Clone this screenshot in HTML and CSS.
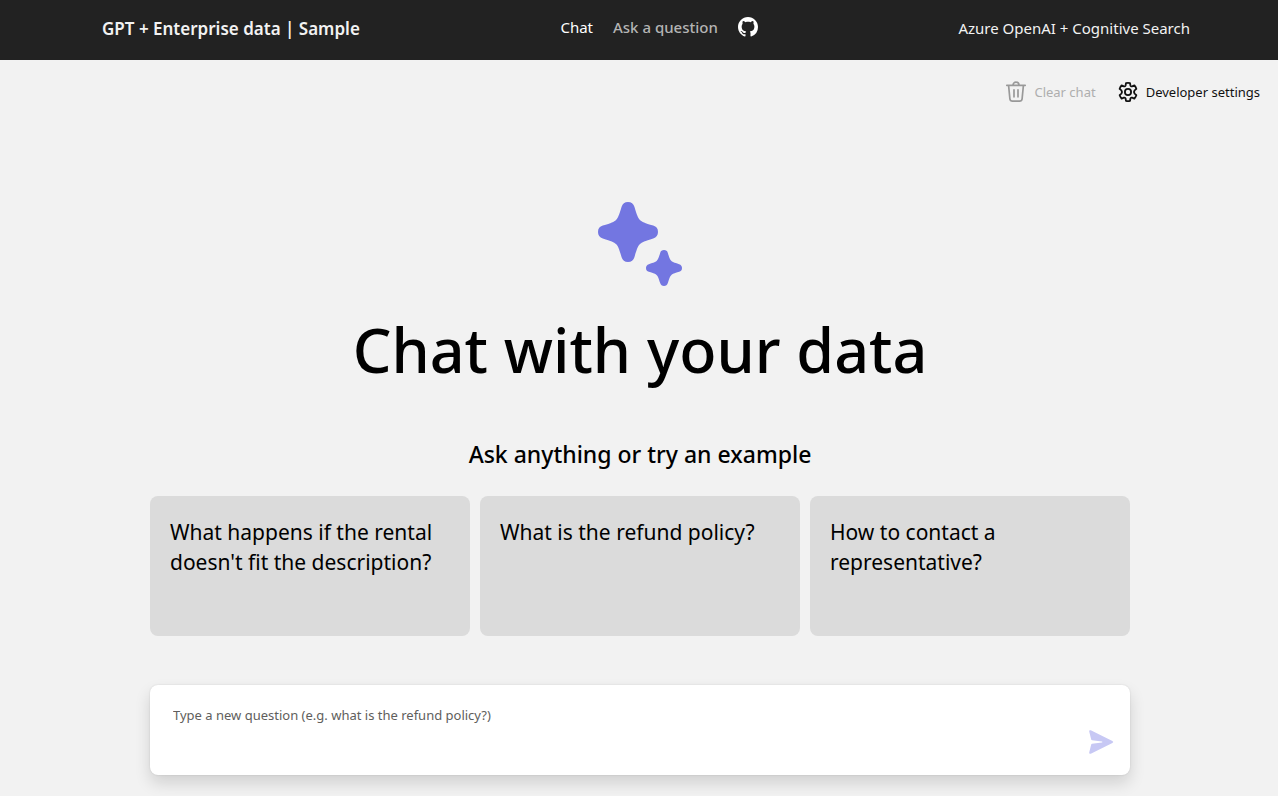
FILE: index.html
```html
<!DOCTYPE html>
<html lang="en">
<head>
<meta charset="utf-8">
<meta name="viewport" content="width=device-width, initial-scale=1">
<title>GPT + Enterprise data | Sample</title>
<link rel="stylesheet" href="styles.css">
</head>
<body>
<header class="header">
  <div class="header-inner">
    <a class="header-title" href="#">GPT + Enterprise data | Sample</a>
    <nav class="nav">
      <a class="nav-link nav-link-active" href="#">Chat</a>
      <a class="nav-link" href="#">Ask a question</a>
      <a class="nav-github" href="#" aria-label="GitHub repository">
        <svg width="20" height="20" viewBox="0 0 16 16" fill="currentColor" aria-hidden="true"><path d="M8 0C3.58 0 0 3.58 0 8c0 3.54 2.29 6.53 5.47 7.59.4.07.55-.17.55-.38 0-.19-.01-.82-.01-1.49-2.01.37-2.53-.49-2.69-.94-.09-.23-.48-.94-.82-1.13-.28-.15-.68-.52-.01-.53.63-.01 1.08.58 1.23.82.72 1.21 1.87.87 2.33.66.07-.52.28-.87.51-1.07-1.78-.2-3.64-.89-3.64-3.95 0-.87.31-1.59.82-2.15-.08-.2-.36-1.02.08-2.12 0 0 .67-.21 2.2.82.64-.18 1.32-.27 2-.27s1.36.09 2 .27c1.53-1.04 2.2-.82 2.2-.82.44 1.1.16 1.92.08 2.12.51.56.82 1.27.82 2.15 0 3.07-1.87 3.75-3.65 3.95.29.25.54.73.54 1.48 0 1.07-.01 1.93-.01 2.2 0 .21.15.46.55.38A8.01 8.01 0 0 0 16 8c0-4.42-3.58-8-8-8z"/></svg>
      </a>
    </nav>
    <span class="header-tagline">Azure OpenAI + Cognitive Search</span>
  </div>
</header>
<main class="page">
  <div class="commands">
    <button class="command" type="button" disabled>
      <svg width="24" height="24" viewBox="0 0 24 24" fill="none" stroke="currentColor" stroke-width="1.7" stroke-linecap="round" stroke-linejoin="round" aria-hidden="true"><path d="M2.8 5.3h18.4M9 5.2a3 3 0 0 1 6 0M4.6 5.5l1.3 13.4a2.6 2.6 0 0 0 2.6 2.3h7a2.6 2.6 0 0 0 2.6-2.3l1.3-13.4M10 9.8v7M14 9.8v7"/></svg>
      <span class="command-label">Clear chat</span>
    </button>
    <button class="command" type="button">
      <svg width="24" height="24" viewBox="0 0 24 24" fill="none" stroke="currentColor" stroke-width="1.8" stroke-linejoin="round" aria-hidden="true"><circle cx="12" cy="12" r="3.1"/><path d="M10 3.1q2-.5 4 0l.4 2.3q.4 1.3 1.7.9l2.3-.9q1.4 1.5 2 3.5l-1.8 1.5q-1.2 1.6 0 3.2l1.8 1.5q-.6 2-2 3.5l-2.3-.9q-1.3-.4-1.7.9l-.4 2.3q-2 .5-4 0l-.4-2.3q-.4-1.3-1.7-.9l-2.3.9q-1.4-1.5-2-3.5l1.8-1.5q1.2-1.6 0-3.2L3.6 8.9q.6-2 2-3.5l2.3.9q1.3.4 1.7-.9z"/></svg>
      <span class="command-label">Developer settings</span>
    </button>
  </div>
  <div class="chat">
    <section class="empty">
      <svg class="sparkle" width="84" height="84" viewBox="0 0 84 84" aria-hidden="true">
        <defs><path id="star" d="M0-30C3.4-30 5.4-28.4 6.4-25.2C9-16.5 10-14 12-12C14-10 16.5-9 25.2-6.4C28.4-5.4 30-3.4 30 0C30 3.4 28.4 5.4 25.2 6.4C16.5 9 14 10 12 12C10 14 9 16.5 6.4 25.2C5.4 28.4 3.4 30 0 30C-3.4 30-5.4 28.4-6.4 25.2C-9 16.5-10 14-12 12C-14 10-16.5 9-25.2 6.4C-28.4 5.4-30 3.4-30 0C-30-3.4-28.4-5.4-25.2-6.4C-16.5-9-14-10-12-12C-10-14-9-16.5-6.4-25.2C-5.4-28.4-3.4-30 0-30Z"/></defs>
        <use href="#star" transform="translate(30 30)"/>
        <use href="#star" transform="translate(66 66) scale(.6)"/>
      </svg>
      <h1 class="title">Chat with your data</h1>
      <h2 class="subtitle">Ask anything or try an example</h2>
      <div class="examples">
        <button class="example" type="button">What happens if the rental doesn't fit the description?</button>
        <button class="example" type="button">What is the refund policy?</button>
        <button class="example" type="button">How to contact a representative?</button>
      </div>
    </section>
    <form class="question">
      <textarea class="question-input" aria-label="Question" placeholder="Type a new question (e.g. what is the refund policy?)"></textarea>
      <button class="send" type="button" aria-label="Ask question" disabled>
        <svg width="28" height="28" viewBox="0 0 28 28" fill="currentColor" aria-hidden="true"><path d="M3.8 2.3 25.4 13Q27.2 14 25.4 15L3.8 25.7Q1.9 26.3 2.2 24.4L4.2 16.6Q4.4 15.9 5.1 15.8L15 14.4Q16 14 15 13.6L5.1 12.2Q4.4 12.1 4.2 11.4L2.2 3.6Q1.9 1.7 3.8 2.3z"/></svg>
      </button>
    </form>
  </div>
</main>
</body>
</html>
```
FILE: styles.css
```css
* {
  box-sizing: border-box;
}

body {
  margin: 0;
  min-height: 100vh;
  display: flex;
  flex-direction: column;
  background: #f2f2f2;
  color: #000;
  font-family: "Segoe UI", "Noto Sans", sans-serif;
}

button,
textarea {
  font-family: inherit;
  border: 0;
  padding: 0;
  background: none;
}

svg {
  display: block;
  flex: none;
}

.header {
  padding-left: 2px;
  background: #222;
  color: #f2f2f2;
}

.header-inner {
  display: flex;
  align-items: center;
  justify-content: space-between;
  max-width: 1100px;
  height: 60px;
  margin: 0 auto;
  padding-left: 12px;
}

.header-title {
  padding-bottom: 4px;
  color: inherit;
  font-size: 17px;
  font-weight: 600;
  text-decoration: none;
}

.nav {
  display: flex;
  align-items: center;
  gap: 20px;
  padding-bottom: 6px;
}

.nav-link {
  color: #b4b4b4;
  font-size: 15px;
  font-weight: 500;
  text-decoration: none;
}

.nav-link-active {
  color: #fff;
  font-weight: 400;
}

.nav-github {
  color: #fff;
}

.header-tagline {
  padding-bottom: 4px;
  font-size: 15px;
}

.page {
  flex: 1;
  display: flex;
  flex-direction: column;
  padding-left: 2px;
}

.commands {
  display: flex;
  justify-content: flex-end;
  gap: 20px;
  padding: 20px 18px 0;
}

.command {
  display: flex;
  align-items: center;
  gap: 6px;
  color: #111;
  font-size: 13px;
  line-height: 24px;
}

.command:disabled {
  color: #999;
}

.command:disabled .command-label {
  color: #aeaeae;
}

.chat {
  flex: 1;
  display: flex;
  flex-direction: column;
  width: 100%;
  max-width: 1028px;
  margin: 0 auto;
  padding: 0 24px 21px;
}

.empty {
  flex: 1;
  display: flex;
  flex-direction: column;
  align-items: center;
  padding-top: 98px;
}

.sparkle {
  fill: #7376e1;
}

.title {
  margin: 22px 0 46px;
  font-size: 61px;
  font-weight: 500;
  line-height: 84px;
  text-align: center;
}

.subtitle {
  margin: 0 0 26px;
  font-size: 23px;
  font-weight: 500;
  line-height: 32px;
}

.examples {
  display: grid;
  grid-template-columns: repeat(3, 1fr);
  gap: 10px;
  width: 100%;
}

.example {
  display: flex;
  min-height: 140px;
  padding: 21px 20px;
  border-radius: 8px;
  background: #dbdbdb;
  color: #000;
  font-size: 21px;
  line-height: 30px;
  text-align: left;
}

.question {
  display: flex;
  align-items: flex-end;
  min-height: 90px;
  margin-top: 48px;
  padding: 15px 15px 19px 23px;
  border-radius: 8px;
  background: #fff;
  box-shadow: 0 8px 16px rgba(0, 0, 0, 0.14), 0 0 2px rgba(0, 0, 0, 0.12);
}

.question-input {
  flex: 1;
  height: 50px;
  align-self: flex-start;
  padding: 5px 0;
  resize: none;
  outline: none;
  font-size: 13px;
  line-height: 20px;
}

.question-input::placeholder {
  color: #605e5c;
}

.send {
  color: #c7c8f4;
}
```
